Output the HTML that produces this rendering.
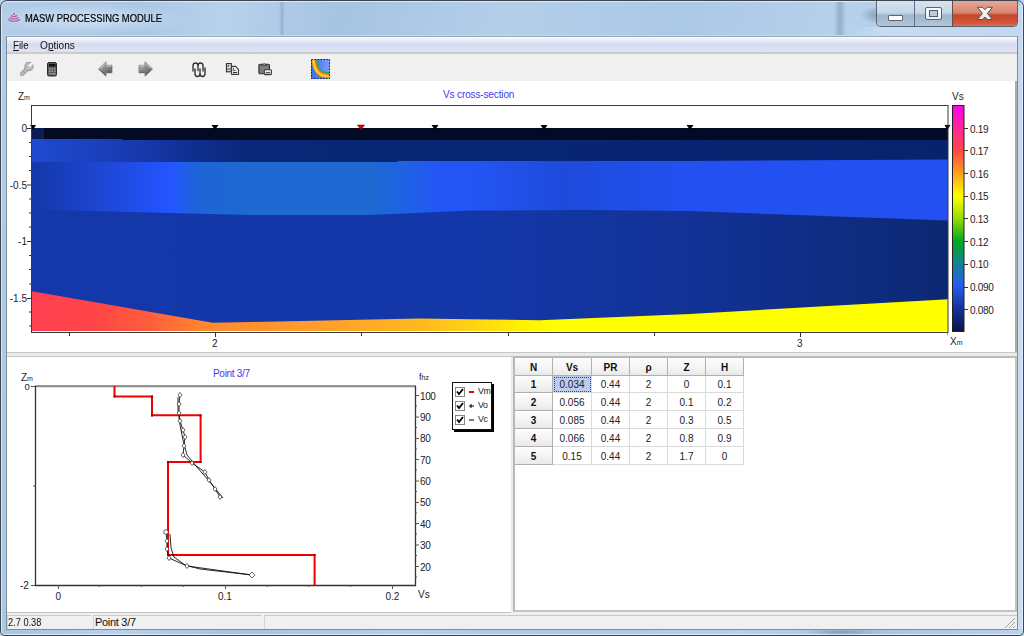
<!DOCTYPE html>
<html><head><meta charset="utf-8">
<style>
*{margin:0;padding:0;box-sizing:border-box}
html,body{width:1024px;height:636px;overflow:hidden}
body{position:relative;background:#b9d1ea;font-family:"Liberation Sans",sans-serif;color:#000}
.a{position:absolute}
.t{position:absolute;white-space:nowrap;line-height:1}
.fx{background:linear-gradient(#fdfdfd,#f3f3f3 60%,#e9e9e9);border-right:1px solid #b0b0b0;border-bottom:1px solid #b0b0b0;font-size:10px;text-align:center;line-height:17px;color:#111}
.cl{background:#fff;border-right:1px solid #dadada;border-bottom:1px solid #dadada;font-size:10px;text-align:center;line-height:17px;color:#222}
.sel{background:#b9cdef;outline:1px dotted #444;outline-offset:-2px}
</style></head><body>
<!-- FRAME -->
<div class="a" id="frame" style="left:0;top:0;width:1024px;height:636px;border-radius:7px 7px 5px 5px;border:1px solid #3c4651;background:linear-gradient(100deg,#b3cde8 0%,#a9c6e4 12%,#b7d2ec 20%,#a6c3e2 30%,#b3cfea 45%,#abc8e6 60%,#b6d1eb 75%,#a8c5e4 88%,#b9d3ec 100%);box-shadow:inset 0 0 0 1px #dbe9f7"></div>
<div class="a" style="left:1017px;top:5px;width:6px;height:624px;background:rgba(225,238,252,0.45)"></div>
<div class="a" style="left:850px;top:27px;width:167px;height:8px;background:linear-gradient(90deg,rgba(225,238,252,0),rgba(225,238,252,0.45) 20%)"></div>
<div class="a" style="left:800px;top:629px;width:84px;height:6px;background:radial-gradient(ellipse 40px 3px at 42px 3px,rgba(90,115,140,0.55),rgba(90,115,140,0))"></div>
<div class="a" style="left:279px;top:2px;width:6px;height:33px;background:linear-gradient(90deg,rgba(120,150,180,0),rgba(120,150,180,0.45) 50%,rgba(120,150,180,0))"></div>
<div class="a" style="left:834px;top:2px;width:12px;height:33px;background:linear-gradient(90deg,rgba(110,140,170,0),rgba(110,140,170,0.5) 50%,rgba(110,140,170,0))"></div>
<div class="a" style="left:860px;top:6px;width:20px;height:18px;background:radial-gradient(ellipse at 100% 50%,rgba(90,110,130,0.55),rgba(90,110,130,0) 70%)"></div>
<div class="a" style="left:0px;top:2px;width:200px;height:34px;background:radial-gradient(ellipse 100px 16px at 90px 17px,rgba(235,245,255,0.55),rgba(235,245,255,0) 100%)"></div>
<!-- title -->
<svg class="a" style="left:6px;top:12px" width="16" height="13" viewBox="0 0 16 13">
 <g fill="none" stroke="#b9509f" stroke-width="1.2">
  <path d="M2,7.5 Q8,11 14,7.5"/><path d="M3.5,5.5 Q8,8.5 12.5,5.5"/><path d="M5,3.5 Q8,6 11,3.5"/>
 </g><circle cx="8" cy="2" r="1" fill="#b9509f"/>
</svg>
<div class="t" id="title" style="left:25px;top:13px;font-size:11px;color:#000;-webkit-text-stroke:0.2px #000;transform:scaleX(0.852);transform-origin:0 0">MASW PROCESSING MODULE</div>
<!-- window buttons -->
<div class="a" style="left:876px;top:1px;width:142px;height:26px;border:1px solid #5a6470;border-top:none;border-radius:0 0 5px 5px;overflow:hidden">
 <div class="a" style="left:0;top:0;width:38px;height:26px;background:linear-gradient(#d7e4f1 0%,#c4d6e8 45%,#9fb6cc 55%,#b2c7dc 100%);border-right:1px solid #5d6f82"></div>
 <div class="a" style="left:38px;top:0;width:38px;height:26px;background:linear-gradient(#d7e4f1 0%,#c4d6e8 45%,#9fb6cc 55%,#b2c7dc 100%);border-right:1px solid #6b4a40"></div>
 <div class="a" style="left:76px;top:0;width:65px;height:26px;background:linear-gradient(#e8a798 0%,#d98370 45%,#c8442a 55%,#d4573b 85%,#e07a5a 100%)"></div>
 <div class="a" style="left:10.5px;top:14px;width:15px;height:6px;background:#fff;border:1px solid #5a6472;border-radius:1px"></div>
 <div class="a" style="left:48px;top:6px;width:17px;height:13px;border:1px solid #5a6472;background:linear-gradient(#fff,#eceef0);border-radius:2px"><div class="a" style="left:3px;top:2px;width:9px;height:7px;background:#b9cadb;border:1px solid #4e5d6c"></div></div>
 <svg class="a" style="left:97px;top:5px" width="22" height="18" viewBox="0 0 22 18"><defs><linearGradient id="gx" x1="0" y1="0" x2="0" y2="1"><stop offset="0" stop-color="#fff"/><stop offset="1" stop-color="#e4e4e4"/></linearGradient></defs><polygon points="3.4,1.3 8.5,1.3 10.9,3.8 13.4,1.3 18.5,1.3 13.4,7.4 18.5,13.5 13.4,13.5 10.9,11 8.5,13.5 3.4,13.5 8.5,7.4" fill="url(#gx)" stroke="#4e5258" stroke-width="1" stroke-linejoin="round"/></svg>
</div>

<!-- CLIENT -->
<div class="a" style="left:6px;top:36px;width:1012px;height:594px;border:1px solid #7d8c9b;border-top-color:#98a8b8;background:#f0f0f0"></div>
<div class="a" style="left:6px;top:35px;width:1012px;height:1px;background:#c4daf0"></div>
<!-- menubar -->
<div class="a" style="left:7px;top:37px;width:1010px;height:17px;background:linear-gradient(#ffffff 0%,#f0f2fa 12%,#dde2f2 35%,#d6dcf0 45%,#dfe4f5 85%,#c9c9cc 88%,#cfcfd2 100%)"></div>
<div class="t" style="left:13px;top:39.5px;font-size:11px;color:#111;transform:scaleX(0.88);transform-origin:0 0"><u>F</u>ile</div>
<div class="t" style="left:40px;top:39.5px;font-size:11px;color:#111;transform:scaleX(0.92);transform-origin:0 0">O<u>p</u>tions</div>
<!-- toolbar -->
<div class="a" style="left:7px;top:54px;width:1010px;height:27px;background:#f0f0f0"></div>
<!-- wrench -->
<svg class="a" style="left:18px;top:60px" width="17" height="18" viewBox="0 0 17 18">
 <defs><mask id="wm"><rect width="17" height="18" fill="#fff"/><path d="M11.6,5.9 L16,1.5" stroke="#000" stroke-width="2.6" stroke-linecap="round"/></mask></defs>
 <g mask="url(#wm)">
 <path d="M3,15 L9,9" stroke="#8e8e8e" stroke-width="4" stroke-linecap="round"/>
 <circle cx="11" cy="6.5" r="4.1" fill="#bcbcbc" stroke="#8e8e8e" stroke-width="0.9"/>
 <path d="M3,15 L9,9" stroke="#bcbcbc" stroke-width="2.4" stroke-linecap="round"/>
 </g>
</svg>
<!-- calculator -->
<svg class="a" style="left:47px;top:62px" width="11" height="15" viewBox="0 0 11 15">
 <rect x="0.5" y="0.5" width="9" height="13.5" rx="1.5" fill="#5a5a5a" stroke="#2a2a2a"/>
 <rect x="2" y="2" width="6.5" height="2.5" fill="#111"/>
 <g fill="#9a9a9a"><rect x="2" y="6" width="1.5" height="1.5"/><rect x="4.5" y="6" width="1.5" height="1.5"/><rect x="7" y="6" width="1.5" height="1.5"/><rect x="2" y="8.5" width="1.5" height="1.5"/><rect x="4.5" y="8.5" width="1.5" height="1.5"/><rect x="7" y="8.5" width="1.5" height="1.5"/><rect x="2" y="11" width="1.5" height="1.5"/><rect x="4.5" y="11" width="4" height="1.5"/></g>
</svg>
<!-- arrows -->
<svg class="a" style="left:98px;top:61px" width="15" height="16" viewBox="0 0 15 16">
 <defs><linearGradient id="ga" x1="0" y1="0" x2="0.6" y2="1"><stop offset="0" stop-color="#c4c4c4"/><stop offset="0.5" stop-color="#8e8e8e"/><stop offset="1" stop-color="#5e5e5e"/></linearGradient></defs>
 <path d="M0.5,8 L8,0.8 L8,4.3 L14,4.3 L14,11.8 L8,11.8 L8,15.2 Z" fill="url(#ga)" stroke="#777" stroke-width="0.8"/><path d="M1.5,8 L7.3,2.4 M8.5,5 H13.3" stroke="#d4d4d4" stroke-width="1"/><path d="M1.5,8.3 L7.5,14 M8.5,11.2 H13.5" stroke="#555" stroke-width="0.9"/>
</svg>
<svg class="a" style="left:138px;top:61px" width="15" height="16" viewBox="0 0 15 16">
 <path d="M14.5,8 L7,0.8 L7,4.3 L1,4.3 L1,11.8 L7,11.8 L7,15.2 Z" fill="url(#ga)" stroke="#777" stroke-width="0.8"/><path d="M7.7,2.4 L13.5,8 M1.7,5 H6.5" stroke="#d4d4d4" stroke-width="1"/><path d="M13.5,8.3 L7.5,14 M1.5,11.2 H6.5" stroke="#555" stroke-width="0.9"/>
</svg>
<!-- wave icon -->
<svg class="a" style="left:191px;top:61px" width="18" height="17" viewBox="0 0 18 17">
 <g fill="none" stroke-linecap="round" stroke="#2e2e2e" stroke-width="1.35">
  <path d="M4,8 V12.5 Q4,15.5 6.5,15.5 Q9,15.5 9,12.5 V8 M9,12.5 Q9,15.5 11.5,15.5 Q14,15.5 14,12.5 V7"/>
  <path d="M2,10 V5 Q2,2 4.5,2 Q7,2 7,5 V9.5 M7,5 Q7,2 9.5,2 Q12,2 12,5 V10"/>
 </g>
</svg>
<!-- copy -->
<svg class="a" style="left:225px;top:62px" width="15" height="14" viewBox="0 0 15 14">
 <rect x="1.5" y="1.6" width="4.8" height="8.2" fill="#e6e6e6" stroke="#2e2e2e" stroke-width="1.1"/>
 <rect x="2.6" y="3.2" width="1.5" height="1.5" fill="#333"/>
 <rect x="2.3" y="6" width="3.6" height="2.2" fill="#8a8a8a"/>
 <path d="M6.6,4.4 H10.6 L13.5,7.3 V12.5 H6.6 Z" fill="#ececec" stroke="#3a3a3a" stroke-width="1.1" stroke-linejoin="round"/>
 <rect x="8" y="10" width="4" height="1.2" fill="#333"/>
 <path d="M8.5,6 V8.5 H10.5" stroke="#555" stroke-width="0.9" fill="none"/>
</svg>
<!-- paste -->
<svg class="a" style="left:258px;top:62px" width="15" height="14" viewBox="0 0 15 14">
 <rect x="0.9" y="2.2" width="10.6" height="9.6" rx="1.2" fill="#7c7c7c" stroke="#2e2e2e" stroke-width="1.1"/>
 <path d="M3.6,3.2 Q6.2,0.2 8.8,3.2 Z" fill="#f4f4f4" stroke="#333" stroke-width="0.9"/>
 <rect x="6.3" y="7.8" width="7.2" height="4.8" rx="1" fill="#ececec" stroke="#3a3a3a" stroke-width="1.1"/>
 <rect x="7.7" y="10.2" width="4.4" height="1.1" fill="#333"/>
</svg>
<!-- colormap icon -->
<svg class="a" style="left:311px;top:59px" width="19" height="20" viewBox="0 0 19 20">
 <defs><linearGradient id="gib" x1="0" y1="0" x2="1" y2="0"><stop offset="0" stop-color="#3c6cf0"/><stop offset="1" stop-color="#7a9cfa"/></linearGradient><clipPath id="icc"><rect width="19" height="20"/></clipPath></defs>
 <rect x="0" y="0" width="19" height="20" fill="url(#gib)"/>
 <g clip-path="url(#icc)" fill="none">
  <path d="M3,-1 Q4,11 9.5,14.5 Q12.5,16.3 20,16.5" stroke="#18b838" stroke-width="6.5"/>
  <path d="M2.5,-1 Q3.5,11.5 9.5,15 Q12.5,16.8 20,17" stroke="#ff7a18" stroke-width="4.5"/>
  <path d="M2,-1 Q3,12 9.5,15.5 Q12.5,17.2 20,17.5" stroke="#ffc848" stroke-width="2.2"/>
 </g>
 <rect x="0.5" y="0.5" width="18" height="19" fill="none" stroke="#222" stroke-width="1" stroke-dasharray="1.5,1.5"/>
</svg>
<!-- TOP PANEL -->
<div class="a" style="left:7px;top:81px;width:1010px;height:271px;background:#fff;border-right:2px solid #ababab"></div>
<svg class="a" style="left:0;top:0" width="1024" height="360" viewBox="0 0 1024 360">
 <defs>
  <linearGradient id="L2" gradientUnits="userSpaceOnUse" x1="32" y1="0" x2="948" y2="0">
   <stop offset="0" stop-color="#1e4bd2"/><stop offset="0.098" stop-color="#193cb4"/><stop offset="0.183" stop-color="#0f2d8c"/><stop offset="0.238" stop-color="#0a2878"/><stop offset="0.4" stop-color="#082673"/><stop offset="1" stop-color="#08236e"/>
  </linearGradient>
  <linearGradient id="L3" gradientUnits="userSpaceOnUse" x1="32" y1="0" x2="948" y2="0">
   <stop offset="0" stop-color="#1437aa"/><stop offset="0.074" stop-color="#1e46d2"/><stop offset="0.15" stop-color="#2355ff"/><stop offset="0.183" stop-color="#1e64d7"/><stop offset="0.238" stop-color="#1e69d2"/><stop offset="0.37" stop-color="#1e69d2"/><stop offset="0.402" stop-color="#1e64e1"/><stop offset="0.445" stop-color="#2355f5"/><stop offset="0.48" stop-color="#2355f5"/><stop offset="0.58" stop-color="#1e4bdc"/><stop offset="0.718" stop-color="#2350f0"/><stop offset="1" stop-color="#2350f0"/>
  </linearGradient>
  <linearGradient id="L4" gradientUnits="userSpaceOnUse" x1="32" y1="0" x2="948" y2="0">
   <stop offset="0" stop-color="#1437aa"/><stop offset="0.5" stop-color="#1337a8"/><stop offset="0.718" stop-color="#123296"/><stop offset="1" stop-color="#0c2873"/>
  </linearGradient>
  <linearGradient id="L5" gradientUnits="userSpaceOnUse" x1="32" y1="0" x2="948" y2="0">
   <stop offset="0" stop-color="#ff4052"/><stop offset="0.074" stop-color="#ff4646"/><stop offset="0.129" stop-color="#ff5f3c"/><stop offset="0.197" stop-color="#ff8c2d"/><stop offset="0.238" stop-color="#ff912d"/><stop offset="0.347" stop-color="#ffa528"/><stop offset="0.424" stop-color="#ffb91e"/><stop offset="0.478" stop-color="#ffd214"/><stop offset="0.543" stop-color="#fff500"/><stop offset="0.576" stop-color="#ffff00"/><stop offset="1" stop-color="#ffff00"/>
  </linearGradient>
  <linearGradient id="CB" x1="0" y1="0" x2="0" y2="1">
   <stop offset="0" stop-color="#ff00ee"/><stop offset="0.1" stop-color="#ff2896"/><stop offset="0.2" stop-color="#ff4646"/><stop offset="0.3" stop-color="#ffa01e"/><stop offset="0.4" stop-color="#ffff00"/><stop offset="0.5" stop-color="#96dc00"/><stop offset="0.6" stop-color="#00aa1e"/><stop offset="0.7" stop-color="#148296"/><stop offset="0.8" stop-color="#285af0"/><stop offset="0.9" stop-color="#143296"/><stop offset="1" stop-color="#0a1446"/>
  </linearGradient>
 </defs>
 <!-- layers -->
 <rect x="32" y="128" width="916" height="203" fill="#030a23"/>
 <rect x="32" y="128" width="12" height="11" fill="#0c1c55"/>
 <polygon fill="url(#L2)" points="32,139 122,139 122,140 948,140 948,331 32,331"/>
 <polygon fill="url(#L3)" points="32,162 398,162 398,161 690,161 948,159.6 948,331 32,331"/>
 <polygon fill="url(#L4)" points="32,209.6 250,215 370,215 470,210.6 580,210 690,211 948,220.5 948,331 32,331"/>
 <polygon fill="url(#L5)" points="32,291.3 212.6,322.7 250,322 420,318.4 470,319.2 540,320.3 690,313.9 948,299.2 948,331 32,331"/>
 <!-- markers -->
 <g fill="#000">
  <path d="M30,125 h6 l-3,5z"/><path d="M211.5,125 h7 l-3.5,5z"/><path d="M431.5,125 h7 l-3.5,5z"/><path d="M540.5,125 h7 l-3.5,5z"/><path d="M686.5,125 h7 l-3.5,5z"/><path d="M944.5,125 h6 l-3,5z"/>
 </g>
 <path d="M357.5,125 h7 l-3.5,5z" fill="#e00000" stroke="#600" stroke-width="0.5"/>
 <!-- plot frame -->
 <rect x="31.5" y="105.5" width="916.5" height="227" fill="none" stroke="#3a3a3a" stroke-width="1"/>
 <!-- y ticks -->
 <g stroke="#333" stroke-width="1">
  <path d="M27,128.5h4 M27,185h4 M27,241.5h4 M27,298.5h4"/>
  <path d="M29,142.5h2 M29,156.5h2 M29,170.5h2 M29,199h2 M29,213h2 M29,227h2 M29,255.5h2 M29,269.5h2 M29,284h2 M29,312h2 M29,326h2"/>
  <path d="M69.5,333v3 M215.5,333v4 M361.5,333v3 M508.5,333v3 M654.5,333v3 M800.5,333v4"/><path d="M947.5,333v2" stroke="#999"/>
 </g>
 <!-- colorbar -->
 <rect x="952.5" y="105.5" width="11.5" height="226" fill="url(#CB)" stroke="#222" stroke-width="1"/>
 <g stroke="#333"><path d="M964,128.5h4 M964,150.5h4 M964,173.5h4 M964,196.5h4 M964,218.5h4 M964,241.5h4 M964,264.5h4 M964,287.5h4 M964,309.5h4"/></g>
</svg>
<!-- top chart labels -->
<div class="t" style="left:443px;top:89.5px;font-size:10px;color:#3c3cf0;letter-spacing:-0.13px">Vs cross-section</div>
<div class="t" style="left:18px;top:92px;font-size:10px;color:#222">Z<span style="font-size:7px">m</span></div>
<div class="t" style="left:952px;top:92px;font-size:10px;color:#222">Vs</div>
<div class="t" style="left:950px;top:337px;font-size:10px;color:#222">X<span style="font-size:7px">m</span></div>
<div class="t" style="left:0;top:124px;width:27px;text-align:right;font-size:10px;color:#222">0</div>
<div class="t" style="left:0;top:181px;width:27px;text-align:right;font-size:10px;color:#222">-0.5</div>
<div class="t" style="left:0;top:237px;width:27px;text-align:right;font-size:10px;color:#222">-1</div>
<div class="t" style="left:0;top:294px;width:27px;text-align:right;font-size:10px;color:#222">-1.5</div>
<div class="t" style="left:212px;top:339px;font-size:10px;color:#222">2</div>
<div class="t" style="left:797px;top:339px;font-size:10px;color:#222">3</div>
<div class="t" style="left:970px;top:118.5px;font-size:10px;color:#222;line-height:22.65px;letter-spacing:-0.3px">0.19<br>0.17<br>0.16<br>0.15<br>0.13<br>0.12<br>0.10<br>0.090<br>0.080</div>

<!-- SPLITTER -->
<div class="a" style="left:7px;top:352px;width:1010px;height:5px;background:#ebebeb;border-top:1px solid #c8c8c8;border-bottom:1px solid #c8c8c8"></div>

<!-- BOTTOM LEFT PANEL -->
<div class="a" style="left:7px;top:357px;width:504px;height:256px;background:#fff;border-bottom:1px solid #c0c0c0"></div>
<div class="a" style="left:511px;top:357px;width:2px;height:255px;background:#ebebeb"></div>

<!-- TABLE PANEL -->
<div class="a" style="left:513px;top:356px;width:504px;height:256px;background:#fff;border-left:2px solid #b9b9b9;border-top:2px solid #b9b9b9;border-right:2px solid #c4c4c4;border-bottom:2px solid #c4c4c4"></div>

<!-- STATUS BAR -->
<div class="a" style="left:7px;top:613px;width:1010px;height:16px;background:#f0f0f0"></div>

<!-- BOTTOM CHART -->
<svg class="a" style="left:0;top:356px" width="512" height="256" viewBox="0 356 512 256">
 <rect x="35.5" y="386" width="380" height="199.5" fill="none" stroke="#444" stroke-width="1"/>
 <path d="M35,386.5h381" stroke="#8a8a8a" stroke-width="1.5"/>
 <path d="M35.5,386v200 M415.5,386v200 M35,585.5h381" stroke="#333" stroke-width="1.3"/>
 <g stroke="#555" stroke-width="1">
  <path d="M31,386.5h4 M31,585.5h4 M33,486h2"/>
  <path d="M58.5,585v4 M99.5,585v2 M141.5,585v2 M183.5,585v2 M225.5,585v4 M267.5,585v2 M308.5,585v2 M350.5,585v2 M392.5,585v4"/>
  <path d="M415,395.5h4 M415,417h4 M415,438.5h4 M415,459.5h4 M415,481h4 M415,502.5h4 M415,523.5h4 M415,545h4 M415,566.5h4"/>
  <path d="M415,406h2 M415,427.5h2 M415,449h2 M415,470h2 M415,491.5h2 M415,513h2 M415,534h2 M415,555.5h2 M415,577h2"/>
 </g>
 <path d="M114.5,386 V396.4 H152 V415.3 H200.6 V462 H168 V555 H314.6 V585" fill="none" stroke="#f00000" stroke-width="2"/>
 <g fill="#800"><rect x="113.5" y="395.5" width="2" height="2"/><rect x="151" y="395.5" width="2" height="2"/><rect x="151" y="414.5" width="2" height="2"/><rect x="199.5" y="414.5" width="2" height="2"/><rect x="199.5" y="461" width="2" height="2"/><rect x="167" y="461" width="2" height="2"/><rect x="167" y="554" width="2" height="2"/><rect x="313.5" y="554" width="2" height="2"/></g>
 <g fill="none" stroke="#111" stroke-width="0.9">
  <polyline points="180,395 179,404 179,413 180,421 183,430 185,437 184,446 183,455 192,463 205,472 209,480 215,489 220,497"/>
  <polyline points="178,397 178,410 180,425 183,440 187,455 196,466 210,482 223,498"/>
  <polyline points="166,532 167,541 167,549 169,558 187,566 252,575"/>
  <polyline points="170,534 171,548 174,557 185,565 200,569 252,575"/>
 </g>
 <g fill="#fff" stroke="#222" stroke-width="0.7">
  <path d="M180,392.5 l2,2.5 l-2,2.5 l-2,-2.5z"/><path d="M179,401.5 l2,2.5 l-2,2.5 l-2,-2.5z"/><path d="M179,410.5 l2,2.5 l-2,2.5 l-2,-2.5z"/><path d="M180,418.5 l2,2.5 l-2,2.5 l-2,-2.5z"/><path d="M183,427.5 l2,2.5 l-2,2.5 l-2,-2.5z"/><path d="M185,434.5 l2,2.5 l-2,2.5 l-2,-2.5z"/><path d="M184,443.5 l2,2.5 l-2,2.5 l-2,-2.5z"/><path d="M183,452.5 l2,2.5 l-2,2.5 l-2,-2.5z"/><path d="M192,460.5 l2,2.5 l-2,2.5 l-2,-2.5z"/><path d="M205,469.5 l2,2.5 l-2,2.5 l-2,-2.5z"/><path d="M209,477.5 l2,2.5 l-2,2.5 l-2,-2.5z"/><path d="M215,486.5 l2,2.5 l-2,2.5 l-2,-2.5z"/><path d="M220,494.5 l2,2.5 l-2,2.5 l-2,-2.5z"/>
  <circle cx="166" cy="532" r="2.3"/><path d="M167,538.5 l2,2.5 l-2,2.5 l-2,-2.5z"/><path d="M167,546.5 l2,2.5 l-2,2.5 l-2,-2.5z"/><path d="M169,555.5 l2,2.5 l-2,2.5 l-2,-2.5z"/><path d="M187,563.5 l2,2.5 l-2,2.5 l-2,-2.5z"/><path d="M252,572 l3,3 l-3,3 l-3,-3z"/>
 </g>
 <!-- legend -->
 <rect x="454" y="384" width="40" height="48" fill="#000"/>
 <rect x="452.5" y="382.5" width="39" height="47" fill="#fff" stroke="#111" stroke-width="1"/>
 <g fill="#fff" stroke="#888" stroke-width="1">
  <rect x="455.5" y="387.5" width="9" height="9"/><rect x="455.5" y="401.5" width="9" height="9"/><rect x="455.5" y="415.5" width="9" height="9"/>
 </g>
 <g fill="none" stroke="#000" stroke-width="1.8">
  <path d="M457,391.5 l2,2.5 l4,-5"/><path d="M457,405.5 l2,2.5 l4,-5"/><path d="M457,419.5 l2,2.5 l4,-5"/>
 </g>
 <path d="M469,392h5" stroke="#e00" stroke-width="2"/>
 <path d="M469,406h5 M471,404v4" stroke="#000" stroke-width="1"/>
 <path d="M469,420h5" stroke="#000" stroke-width="1"/>
</svg>
<div class="t" style="left:21px;top:373px;font-size:10px;color:#222">Z<span style="font-size:7px">m</span></div>
<div class="t" style="left:24.5px;top:382px;font-size:9.5px;color:#222">0</div>
<div class="t" style="left:20px;top:581px;font-size:10px;color:#222">-2</div>
<div class="t" style="left:55.5px;top:592px;font-size:10px;color:#222">0</div>
<div class="t" style="left:218px;top:592px;font-size:10px;color:#222">0.1</div>
<div class="t" style="left:385.5px;top:592px;font-size:10px;color:#222">0.2</div>
<div class="t" style="left:418px;top:590px;font-size:10px;color:#222">Vs</div>
<div class="t" style="left:419px;top:373px;font-size:9px;color:#222">f<span style="font-size:7px">hz</span></div>
<div class="t" style="left:420px;top:385.5px;font-size:10px;color:#222;letter-spacing:-0.4px;line-height:21.37px">100<br>90<br>80<br>70<br>60<br>50<br>40<br>30<br>20</div>
<div class="t" style="left:213px;top:369px;font-size:10px;color:#3c3cf0;letter-spacing:-0.3px">Point 3/7</div>
<div class="t" style="left:478px;top:383.5px;font-size:8.8px;color:#222;line-height:14.2px;letter-spacing:-0.3px">Vm<br>Vo<br>Vc</div>

<!-- TABLE -->
<div class="a fx" style="left:515px;top:358px;width:38px;height:18px;line-height:19px"><b>N</b></div>
<div class="a fx" style="left:553px;top:358px;width:39px;height:18px;line-height:19px"><b>Vs</b></div>
<div class="a fx" style="left:592px;top:358px;width:38px;height:18px;line-height:19px"><b>PR</b></div>
<div class="a fx" style="left:630px;top:358px;width:38px;height:18px;line-height:19px"><b>&rho;</b></div>
<div class="a fx" style="left:668px;top:358px;width:38px;height:18px;line-height:19px"><b>Z</b></div>
<div class="a fx" style="left:706px;top:358px;width:38px;height:18px;line-height:19px"><b>H</b></div>
<div class="a fx" style="left:515px;top:376px;width:38px;height:17px;line-height:18px"><b>1</b></div>
<div class="a cl sel" style="left:553px;top:376px;width:39px;height:17px;line-height:18px">0.034</div>
<div class="a cl" style="left:592px;top:376px;width:38px;height:17px;line-height:18px">0.44</div>
<div class="a cl" style="left:630px;top:376px;width:38px;height:17px;line-height:18px">2</div>
<div class="a cl" style="left:668px;top:376px;width:38px;height:17px;line-height:18px">0</div>
<div class="a cl" style="left:706px;top:376px;width:38px;height:17px;line-height:18px">0.1</div>
<div class="a fx" style="left:515px;top:393px;width:38px;height:18px;line-height:19px"><b>2</b></div>
<div class="a cl" style="left:553px;top:393px;width:39px;height:18px;line-height:19px">0.056</div>
<div class="a cl" style="left:592px;top:393px;width:38px;height:18px;line-height:19px">0.44</div>
<div class="a cl" style="left:630px;top:393px;width:38px;height:18px;line-height:19px">2</div>
<div class="a cl" style="left:668px;top:393px;width:38px;height:18px;line-height:19px">0.1</div>
<div class="a cl" style="left:706px;top:393px;width:38px;height:18px;line-height:19px">0.2</div>
<div class="a fx" style="left:515px;top:411px;width:38px;height:18px;line-height:19px"><b>3</b></div>
<div class="a cl" style="left:553px;top:411px;width:39px;height:18px;line-height:19px">0.085</div>
<div class="a cl" style="left:592px;top:411px;width:38px;height:18px;line-height:19px">0.44</div>
<div class="a cl" style="left:630px;top:411px;width:38px;height:18px;line-height:19px">2</div>
<div class="a cl" style="left:668px;top:411px;width:38px;height:18px;line-height:19px">0.3</div>
<div class="a cl" style="left:706px;top:411px;width:38px;height:18px;line-height:19px">0.5</div>
<div class="a fx" style="left:515px;top:429px;width:38px;height:18px;line-height:19px"><b>4</b></div>
<div class="a cl" style="left:553px;top:429px;width:39px;height:18px;line-height:19px">0.066</div>
<div class="a cl" style="left:592px;top:429px;width:38px;height:18px;line-height:19px">0.44</div>
<div class="a cl" style="left:630px;top:429px;width:38px;height:18px;line-height:19px">2</div>
<div class="a cl" style="left:668px;top:429px;width:38px;height:18px;line-height:19px">0.8</div>
<div class="a cl" style="left:706px;top:429px;width:38px;height:18px;line-height:19px">0.9</div>
<div class="a fx" style="left:515px;top:447px;width:38px;height:18px;line-height:19px"><b>5</b></div>
<div class="a cl" style="left:553px;top:447px;width:39px;height:18px;line-height:19px">0.15</div>
<div class="a cl" style="left:592px;top:447px;width:38px;height:18px;line-height:19px">0.44</div>
<div class="a cl" style="left:630px;top:447px;width:38px;height:18px;line-height:19px">2</div>
<div class="a cl" style="left:668px;top:447px;width:38px;height:18px;line-height:19px">1.7</div>
<div class="a cl" style="left:706px;top:447px;width:38px;height:18px;line-height:19px">0</div>

<!-- STATUS PANELS -->
<div class="a" style="left:7px;top:615px;width:84px;height:14px;border-top:1px solid #c8c8c8;border-left:1px solid #d4d4d4"></div>
<div class="a" style="left:93px;top:615px;width:168px;height:14px;border-top:1px solid #c8c8c8;border-left:1px solid #d4d4d4"></div>
<div class="a" style="left:264px;top:615px;width:753px;height:14px;border-top:1px solid #c8c8c8;border-left:1px solid #d4d4d4"></div>
<div class="t" style="left:8px;top:617px;font-size:11px;color:#111;transform:scaleX(0.84);transform-origin:0 0">2.7 0.38</div>
<div class="t" style="left:95px;top:617px;font-size:11px;color:#111;letter-spacing:-0.3px">Point 3/7</div>
<svg class="a" style="left:1003px;top:616px" width="13" height="13"><path d="M2,12 L12,2 M6,12 L12,6 M10,12 L12,10" stroke="#a0a0a0" stroke-width="1"/></svg>
</body></html>
